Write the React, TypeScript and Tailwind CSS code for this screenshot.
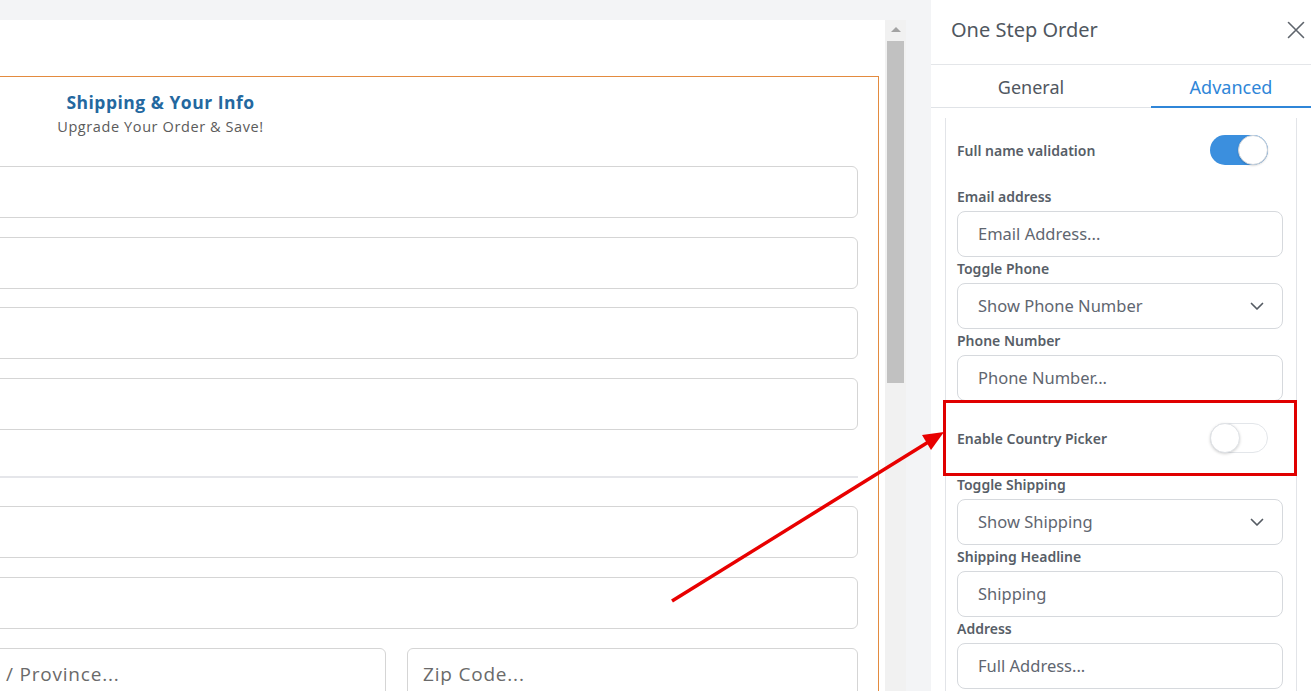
import React from "react";

function Toggle({ on }: { on: boolean }) {
  return on ? (
    <div className="w-[58px] h-[30px] rounded-full bg-[#3b8fde] relative">
      <div className="absolute right-0 top-0 w-[30px] h-[30px] rounded-full bg-white border border-[#cfd4da] shadow-[0_1px_2px_rgba(0,0,0,0.15)]" />
    </div>
  ) : (
    <div className="w-[58px] h-[30px] rounded-full bg-white border border-[#e3e6ea] relative">
      <div className="absolute left-[-1px] top-[-1px] w-[30px] h-[30px] rounded-full bg-white border border-[#dfe2e6] shadow-[0_1px_3px_rgba(0,0,0,0.18)]" />
    </div>
  );
}

function Chevron() {
  return (
    <svg width="14" height="9" viewBox="0 0 14 9" fill="none">
      <path d="M1.5 1.5 L7 7 L12.5 1.5" stroke="#555b63" strokeWidth="1.7" strokeLinecap="round" strokeLinejoin="round" />
    </svg>
  );
}

function Field({ label, text, select }: { label: string; text: string; select?: boolean }) {
  return (
    <div className="flex flex-col">
      <div className="h-[20px] leading-[20px] text-[14px] font-semibold text-[#575e67] mb-[4px]">{label}</div>
      <div className="h-[46px] rounded-[8px] border border-[#d6d9dd] flex items-center justify-between pl-[20px] pr-[18px] text-[16.5px] text-[#5f6670]">
        <span className="pt-[1px]">{text}</span>
        {select && <Chevron />}
      </div>
    </div>
  );
}

function LeftInput({ text, w }: { text?: string; w?: string }) {
  return (
    <div className={`h-[52px] rounded-[6px] border border-[#d5d5d5] flex items-center pl-[15px] text-[19px] tracking-[0.8px] text-[#6a6a6a] ${w ?? ""}`}>
      {text}
    </div>
  );
}

export default function App() {
  return (
    <div
      className="w-[1311px] h-[691px] flex bg-[#f3f4f6] relative overflow-hidden"
      style={{ fontFamily: "'Noto Sans', 'Open Sans', sans-serif" }}
    >
      {/* Left editor canvas */}
      <div className="w-[931px] flex flex-col pt-[20px] shrink-0">
        <div className="flex flex-1 min-h-0">
          <div
            className="w-[885px] bg-white overflow-hidden pt-[56px]"
            style={{ fontFamily: "'Open Sans', 'Noto Sans', sans-serif" }}
          >
            <div className="ml-[-558px] w-[1437px] border border-[#e38b3f] pb-[40px]">
              <div className="flex flex-col items-center pt-[13px] h-[89px]">
                <div className="text-[17.5px] leading-[24px] font-bold tracking-[0.5px] text-[#24689f]">Shipping &amp; Your Info</div>
                <div className="text-[14.5px] leading-[20px] mt-[3px] tracking-[0.6px] text-[#5b5b5b]">Upgrade Your Order &amp; Save!</div>
              </div>
              <div className="pl-[20px] pr-[20px] flex flex-col">
                <div className="flex flex-col gap-[18.7px]">
                  <LeftInput />
                  <LeftInput />
                  <LeftInput />
                  <LeftInput />
                </div>
                <div className="h-[2px] bg-[#e5e6ea] mt-[46px] mb-[28px]" />
                <div className="flex flex-col gap-[19px]">
                  <LeftInput />
                  <LeftInput />
                  <div className="flex gap-[21px]">
                    <LeftInput text="City..." w="w-[451px]" />
                    <LeftInput text="State / Province..." w="w-[451px]" />
                    <LeftInput text="Zip Code..." w="w-[451px]" />
                  </div>
                </div>
              </div>
            </div>
          </div>
          {/* scrollbar */}
          <div className="w-[21px] bg-[#f1f1f1] flex flex-col items-center">
            <div className="h-[21px] flex items-center justify-center pb-[2px]">
              <div className="w-0 h-0 border-l-[5px] border-r-[5px] border-b-[5px] border-l-transparent border-r-transparent border-b-[#a3a3a3]" />
            </div>
            <div className="w-[17px] h-[342px] bg-[#c1c1c1]" />
          </div>
        </div>
      </div>

      {/* Right settings panel */}
      <div className="w-[380px] bg-white flex flex-col shrink-0">
        <div className="h-[65px] border-b border-[#e4e6e9] flex items-center justify-between pl-[20px] pr-[6px] pb-[4px] shrink-0">
          <div className="text-[20px] text-[#50575f]">One Step Order</div>
          <svg width="18" height="18" viewBox="0 0 18 18" fill="none">
            <path d="M1.5 1.5 L16.5 16.5 M16.5 1.5 L1.5 16.5" stroke="#5f656d" strokeWidth="1.6" strokeLinecap="round" />
          </svg>
        </div>
        <div className="h-[43px] border-b border-[#e0e3e7] flex justify-between pl-[20px] shrink-0">
          <div className="w-[160px] flex items-center justify-center pt-[3px] text-[18px] text-[#50575f]">General</div>
          <div className="w-[160px] flex items-center justify-center pt-[3px] text-[18px] text-[#2f86d8] border-b-2 border-[#2f86d8] mb-[-1px]">
            Advanced
          </div>
        </div>
        <div className="flex-1 min-h-0 pt-[10px] px-[14px] overflow-hidden">
          <div className="border-x border-[#e2e4e8] h-full pl-[11px] pr-[13px] pt-[17px] flex flex-col">
            <div className="h-[30px] flex items-center justify-between pr-[15px]">
              <div className="text-[14px] font-semibold text-[#575e67]">Full name validation</div>
              <Toggle on />
            </div>
            <div className="flex flex-col gap-[2px] mt-[22px]">
              <Field label="Email address" text="Email Address..." />
              <Field label="Toggle Phone" text="Show Phone Number" select />
              <Field label="Phone Number" text="Phone Number..." />
            </div>
            <div className="h-[74px] flex items-center justify-between pr-[15px]">
              <div className="text-[14px] font-semibold text-[#575e67]">Enable Country Picker</div>
              <Toggle on={false} />
            </div>
            <div className="flex flex-col gap-[2px]">
              <Field label="Toggle Shipping" text="Show Shipping" select />
              <Field label="Shipping Headline" text="Shipping" />
              <Field label="Address" text="Full Address..." />
            </div>
          </div>
        </div>
      </div>

      {/* Annotation overlays */}
      <div className="absolute left-[943px] top-[400px] w-[354px] h-[76px] border-[3px] border-[#e00000] pointer-events-none" />
      <svg className="absolute left-0 top-0 pointer-events-none" width="1311" height="691" viewBox="0 0 1311 691">
        <line x1="672" y1="601" x2="930" y2="441" stroke="#e80000" strokeWidth="3.5" />
        <polygon points="944,432 922,435 931,450" fill="#e80000" />
      </svg>
    </div>
  );
}
